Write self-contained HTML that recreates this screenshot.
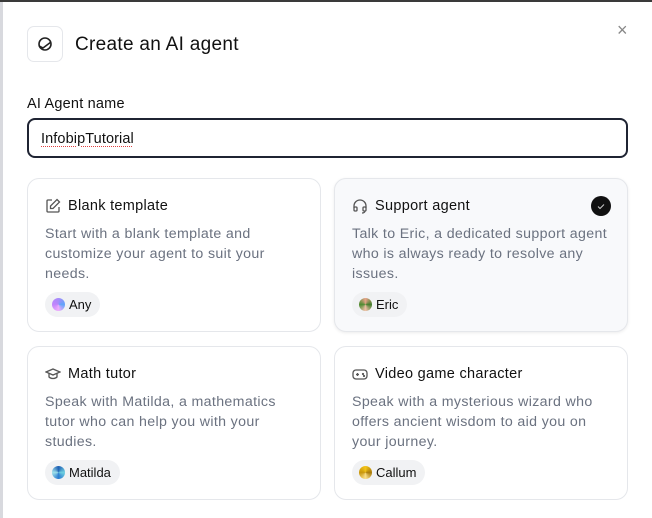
<!DOCTYPE html>
<html><head><meta charset="utf-8"><style>
*{box-sizing:border-box;margin:0;padding:0}
body{width:652px;height:518px;overflow:hidden;background:#fff;font-family:"Liberation Sans",sans-serif;position:relative}
.top{position:absolute;left:0;top:0;width:652px;height:2px;background:#3a3a3a}
.left{position:absolute;left:0;top:2px;width:3px;height:516px;background:#d8d9de}
.ib{position:absolute;left:27px;top:26px;width:36px;height:36px;border:1px solid #e5e7eb;border-radius:7px;background:#fff}
h1{position:absolute;left:75px;top:34px;font-size:19px;font-weight:400;color:#111;letter-spacing:.3px}
.x{position:absolute;left:617px;top:20px;font-size:18px;color:#888}
.lab{position:absolute;left:27px;top:96px;font-size:14.5px;color:#111;letter-spacing:.2px}
.inp{position:absolute;left:27px;top:118px;width:601px;height:40px;border:2px solid #1f2433;border-radius:8px;font-size:14.5px;padding:11px 0 0 12px;color:#111;letter-spacing:.1px}
.inp span{text-decoration:underline dotted #e04040 1px;text-underline-offset:3px}
.card{position:absolute;width:294px;height:154px;border:1px solid #e5e7eb;border-radius:12px;background:#fff}
.card.sel{background:#f8f9fb;box-shadow:0 1px 3px rgba(0,0,0,.08)}
.t{position:absolute;left:40px;top:19px;font-size:14.5px;color:#111;letter-spacing:.3px}
.ic{position:absolute;left:17px;top:19px}
.d{position:absolute;left:17px;top:45px;width:280px;font-size:14.2px;line-height:20px;color:#6b7280;letter-spacing:.35px;white-space:nowrap}
.chip{position:absolute;left:17px;top:113px;height:25px;border-radius:13px;background:#f1f2f4;font-size:13px;color:#111;padding:5px 9px 0 24px}
.av{position:absolute;left:7px;top:6px;width:13px;height:13px;border-radius:50%}
.chk{position:absolute;right:16px;top:17px;width:20px;height:20px;border-radius:50%;background:#111}
</style></head><body>
<div class="top"></div><div class="left"></div>
<div class="ib"><svg width="36" height="36" viewBox="0 0 36 36"><circle cx="17" cy="17" r="6" fill="none" stroke="#222" stroke-width="1.6"/><path d="M11 19 L15 21 L23 15" fill="none" stroke="#222" stroke-width="1.6"/></svg></div>
<h1>Create an AI agent</h1>
<div class="x">×</div>
<div class="lab">AI Agent name</div>
<div class="inp"><span>InfobipTutorial</span></div>

<div class="card" style="left:27px;top:178px">
<svg class="ic" width="16" height="16" viewBox="0 0 16 16" fill="none" stroke="#555" stroke-width="1.3"><path d="M7 2H3a1 1 0 0 0-1 1v10a1 1 0 0 0 1 1h10a1 1 0 0 0 1-1V9"/><path d="M12 1.5l2.5 2.5L8 10.5H5.5V8z"/></svg>
<div class="t">Blank template</div>
<div class="d">Start with a blank template and<br>customize your agent to suit your<br>needs.</div>
<div class="chip"><div class="av" style="background:conic-gradient(#a78bfa,#60a5fa,#f0abfc,#c084fc,#a78bfa)"></div>Any</div>
</div>

<div class="card sel" style="left:334px;top:178px">
<svg class="ic" width="16" height="16" viewBox="0 0 16 16" fill="none" stroke="#555" stroke-width="1.3"><path d="M2 10V8a6 6 0 0 1 12 0v2"/><rect x="2" y="9" width="3" height="4" rx="1"/><rect x="11" y="9" width="3" height="4" rx="1"/><path d="M13 13c0 1-1 2-3 2"/></svg>
<div class="t">Support agent</div>
<div class="chk"><svg width="20" height="20" viewBox="0 0 20 20"><path d="M7 10.5l2 2 4-4" fill="none" stroke="#ccc" stroke-width="1"/></svg></div>
<div class="d">Talk to Eric, a dedicated support agent<br>who is always ready to resolve any<br>issues.</div>
<div class="chip"><div class="av" style="background:conic-gradient(#e8a48a,#3f7d2a,#f2c0a8,#4b8b30,#e8a48a)"></div>Eric</div>
</div>

<div class="card" style="left:27px;top:346px">
<svg class="ic" width="16" height="16" viewBox="0 0 16 16" fill="none" stroke="#555" stroke-width="1.3"><path d="M1 6l7-3 7 3-7 3z"/><path d="M4 7.5V11c2 2 6 2 8 0V7.5"/></svg>
<div class="t">Math tutor</div>
<div class="d">Speak with Matilda, a mathematics<br>tutor who can help you with your<br>studies.</div>
<div class="chip"><div class="av" style="background:conic-gradient(#1e5fb4,#6fd0e0,#2a7bd0,#9ee0ea,#1e5fb4)"></div>Matilda</div>
</div>

<div class="card" style="left:334px;top:346px">
<svg class="ic" width="16" height="16" viewBox="0 0 16 16" fill="none" stroke="#555" stroke-width="1.3"><rect x="1" y="4" width="14" height="9" rx="3"/><path d="M4 8.5h3M5.5 7v3"/><circle cx="11" cy="8" r=".5"/><circle cx="12" cy="10" r=".5"/></svg>
<div class="t">Video game character</div>
<div class="d">Speak with a mysterious wizard who<br>offers ancient wisdom to aid you on<br>your journey.</div>
<div class="chip"><div class="av" style="background:conic-gradient(#f5c518,#a87a0a,#fbe08a,#c8960c,#f5c518)"></div>Callum</div>
</div>
</body></html>
